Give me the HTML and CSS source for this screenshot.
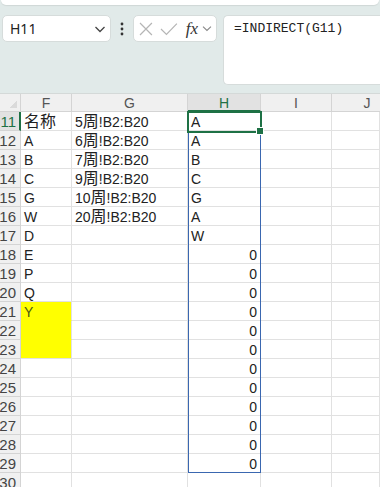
FILE: index.html
```html
<!DOCTYPE html>
<html lang="zh-CN">
<head>
    <meta charset="UTF-8">
    <meta name="viewport" content="width=device-width, initial-scale=1.0">
    <title>INDIRECT</title>
    <link rel="stylesheet" href="styles.css">
</head>
<body>
    <div class="ribbon-edge"></div>
    <div class="formula-bar">
        <div class="name-box">
            <span>H11</span>
            <svg width="12" height="8" viewBox="0 0 12 8"><path d="M1.5 2 L6 6.5 L10.5 2" fill="none" stroke="#444" stroke-width="1.3"/></svg>
        </div>
        <div class="dots">
            <svg width="4" height="14" viewBox="0 0 4 14"><circle cx="2" cy="2" r="1.4" fill="#333"/><circle cx="2" cy="7" r="1.4" fill="#333"/><circle cx="2" cy="12" r="1.4" fill="#333"/></svg>
        </div>
        <div class="fx-box">
            <svg width="14" height="14" viewBox="0 0 14 14"><path d="M1 1 L13 13 M13 1 L1 13" stroke="#b5b5b5" stroke-width="1.2"/></svg>
            <svg width="18" height="14" viewBox="0 0 18 14"><path d="M1 7 L6.5 12.5 L17 1.5" fill="none" stroke="#b5b5b5" stroke-width="1.2"/></svg>
            <span class="fx">fx</span>
            <svg width="10" height="7" viewBox="0 0 10 7"><path d="M1 1.5 L5 5.5 L9 1.5" fill="none" stroke="#888" stroke-width="1.1"/></svg>
        </div>
        <div class="formula-input">=INDIRECT(G11)</div>
    </div>

    <div class="sheet">
        <div class="corner"></div>
        <div class="col-head">F</div>
        <div class="col-head">G</div>
        <div class="col-head active">H</div>
        <div class="col-head">I</div>
        <div class="col-head last-col">J</div>

        <div class="row-head active">11</div><div class="cell"><span class="cjk">名称</span></div><div class="cell">5<span class="cjk">周</span>!B2:B20</div><div class="cell">A</div><div class="cell"></div><div class="cell"></div>
        <div class="row-head">12</div><div class="cell">A</div><div class="cell">6<span class="cjk">周</span>!B2:B20</div><div class="cell">A</div><div class="cell"></div><div class="cell"></div>
        <div class="row-head">13</div><div class="cell">B</div><div class="cell">7<span class="cjk">周</span>!B2:B20</div><div class="cell">B</div><div class="cell"></div><div class="cell"></div>
        <div class="row-head">14</div><div class="cell">C</div><div class="cell">9<span class="cjk">周</span>!B2:B20</div><div class="cell">C</div><div class="cell"></div><div class="cell"></div>
        <div class="row-head">15</div><div class="cell">G</div><div class="cell">10<span class="cjk">周</span>!B2:B20</div><div class="cell">G</div><div class="cell"></div><div class="cell"></div>
        <div class="row-head">16</div><div class="cell">W</div><div class="cell">20<span class="cjk">周</span>!B2:B20</div><div class="cell">A</div><div class="cell"></div><div class="cell"></div>
        <div class="row-head">17</div><div class="cell">D</div><div class="cell"></div><div class="cell">W</div><div class="cell"></div><div class="cell"></div>
        <div class="row-head">18</div><div class="cell">E</div><div class="cell"></div><div class="cell num">0</div><div class="cell"></div><div class="cell"></div>
        <div class="row-head">19</div><div class="cell">P</div><div class="cell"></div><div class="cell num">0</div><div class="cell"></div><div class="cell"></div>
        <div class="row-head">20</div><div class="cell">Q</div><div class="cell"></div><div class="cell num">0</div><div class="cell"></div><div class="cell"></div>
        <div class="row-head">21</div><div class="cell yellow">Y</div><div class="cell"></div><div class="cell num">0</div><div class="cell"></div><div class="cell"></div>
        <div class="row-head">22</div><div class="cell yellow"></div><div class="cell"></div><div class="cell num">0</div><div class="cell"></div><div class="cell"></div>
        <div class="row-head">23</div><div class="cell yellow last"></div><div class="cell"></div><div class="cell num">0</div><div class="cell"></div><div class="cell"></div>
        <div class="row-head">24</div><div class="cell"></div><div class="cell"></div><div class="cell num">0</div><div class="cell"></div><div class="cell"></div>
        <div class="row-head">25</div><div class="cell"></div><div class="cell"></div><div class="cell num">0</div><div class="cell"></div><div class="cell"></div>
        <div class="row-head">26</div><div class="cell"></div><div class="cell"></div><div class="cell num">0</div><div class="cell"></div><div class="cell"></div>
        <div class="row-head">27</div><div class="cell"></div><div class="cell"></div><div class="cell num">0</div><div class="cell"></div><div class="cell"></div>
        <div class="row-head">28</div><div class="cell"></div><div class="cell"></div><div class="cell num">0</div><div class="cell"></div><div class="cell"></div>
        <div class="row-head">29</div><div class="cell"></div><div class="cell"></div><div class="cell num">0</div><div class="cell"></div><div class="cell"></div>
        <div class="row-head">30</div><div class="cell"></div><div class="cell"></div><div class="cell"></div><div class="cell"></div><div class="cell"></div>

        <div class="spill-range"></div>
        <div class="active-cell"><div class="fill-handle"></div></div>
    </div>
</body>
</html>
```

FILE: styles.css
```css
body {
    margin: 0;
    width: 380px;
    height: 487px;
    overflow: hidden;
    background: #e1eae9;
    font-family: 'Liberation Sans', 'Noto Sans CJK SC', sans-serif;
}
.ribbon-edge {
    height: 5px;
    margin: 0 1px;
    background: white;
    border-radius: 0 0 6px 6px;
    box-shadow: 0 1px 1px rgba(0, 0, 0, 0.08);
}
.formula-bar {
    display: flex;
    align-items: flex-start;
    height: 88px;
    padding: 10px 0 0 2px;
    box-sizing: border-box;
}
.name-box, .fx-box, .formula-input {
    background: white;
    border: 1px solid #d6dcdb;
    border-radius: 5px;
    box-sizing: border-box;
}
.name-box {
    display: flex;
    align-items: center;
    justify-content: space-between;
    width: 109px;
    height: 27px;
    padding: 0 4px 0 7px;
    font-family: 'Noto Sans', sans-serif;
    font-size: 14px;
    color: #222;
}
.dots {
    width: 22px;
    height: 27px;
    display: flex;
    align-items: center;
    justify-content: center;
}
.fx-box {
    display: flex;
    align-items: center;
    gap: 7px;
    width: 84px;
    height: 27px;
    padding: 0 4px 0 5px;
}
.fx {
    font-family: 'Liberation Serif', serif;
    font-style: italic;
    font-size: 17px;
    color: #333;
    margin-left: 1px;
    margin-right: -3px;
}
.formula-input {
    flex: 1;
    height: 70px;
    margin-left: 6px;
    padding: 4px 10px;
    border-right: none;
    border-radius: 5px 0 0 5px;
    font-family: 'Liberation Mono', monospace;
    font-size: 13px;
    line-height: 18px;
    color: #222;
}
.sheet {
    position: relative;
    display: grid;
    grid-template-columns: 21px 51px 116px 73px 71px 48px;
    grid-template-rows: 18px;
    grid-auto-rows: 19px;
    background: white;
    border-top: 1px solid #d4d9d8;
}
.corner, .col-head, .row-head {
    background: #f0f0f0;
    border-right: 1px solid #d4d4d4;
    border-bottom: 1px solid #d4d4d4;
    box-sizing: border-box;
    color: #555;
}
.corner {
    background: linear-gradient(135deg, #f0f0f0 62%, #dadada 62%);
    background-size: 10px 10px;
    background-repeat: no-repeat;
    background-position: right 3px bottom 3px;
    background-color: #f0f0f0;
}
.col-head {
    font-size: 14px;
    text-align: center;
    line-height: 18px;
}
.col-head.last-col {
    border-right: none;
    padding-left: 22px;
}
.col-head.active {
    background: #e2e2e2;
    color: #1e7145;
    border-bottom: 2px solid #1e7145;
}
.row-head {
    font-size: 15px;
    line-height: 19px;
    text-align: right;
    padding-right: 4px;
    white-space: nowrap;
    overflow: hidden;
    direction: rtl;
    color: #444;
}
.row-head.active {
    color: #1e7145;
    background: #e2e2e2;
    border-right: 2px solid #1e7145;
    padding-right: 3px;
}
.cell {
    border-right: 1px solid #e1e1e1;
    border-bottom: 1px solid #e1e1e1;
    box-sizing: border-box;
    padding: 0 3px;
    font-size: 14px;
    line-height: 20px;
    color: #222;
    white-space: nowrap;
    overflow: hidden;
}
.cjk {
    font-size: 16px;
}
.num {
    text-align: right;
}
.yellow {
    background: #ffff00;
    border-bottom-color: #ffff00;
    color: #4b5a12;
}
.yellow.last {
    border-bottom-color: #e1e1e1;
}
.spill-range {
    position: absolute;
    left: 188px;
    top: 18px;
    width: 73px;
    height: 361px;
    border: 1px solid #3a67b0;
    box-sizing: border-box;
}
.active-cell {
    position: absolute;
    left: 187px;
    top: 17px;
    width: 75px;
    height: 22px;
    border: 2px solid #1e7145;
    box-sizing: border-box;
}
.fill-handle {
    position: absolute;
    right: -4px;
    bottom: -4px;
    width: 6px;
    height: 6px;
    background: #1e7145;
    border: 1px solid white;
}
```
